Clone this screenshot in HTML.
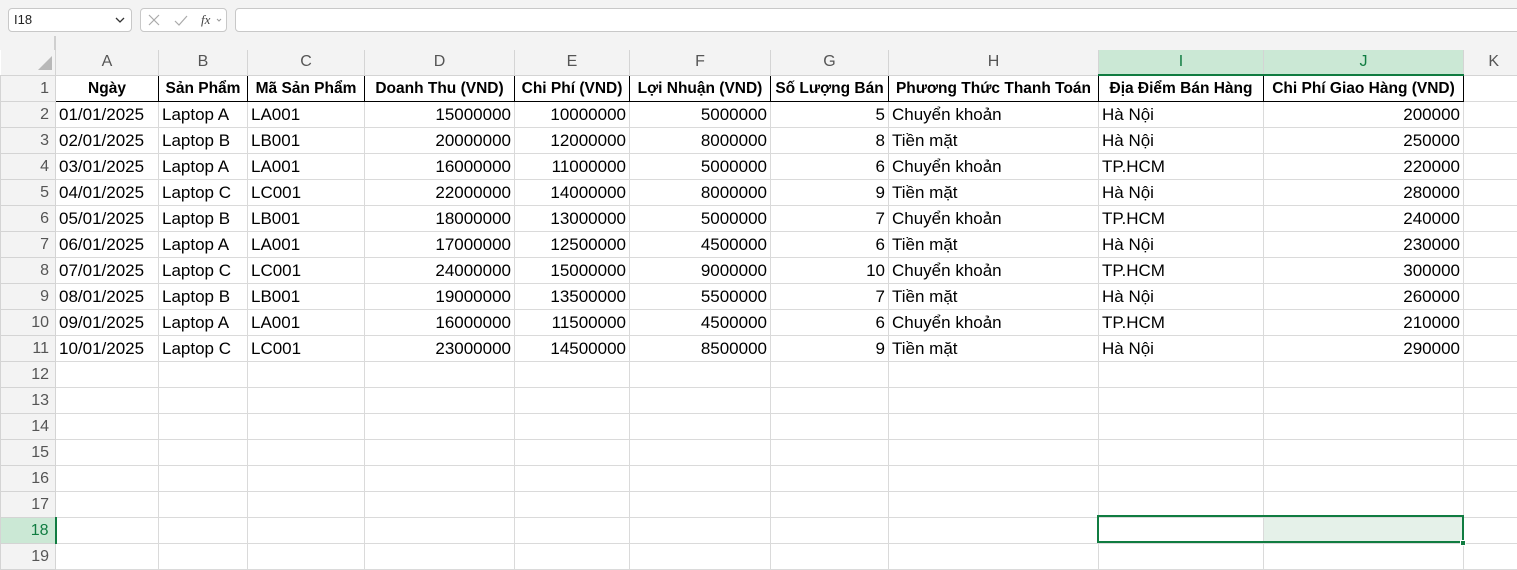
<!DOCTYPE html>
<html><head><meta charset="utf-8"><style>
*{margin:0;padding:0;box-sizing:border-box}
body{width:1517px;height:549px;background:#f3f3f3;font-family:"Liberation Sans",Arial,sans-serif;position:relative;overflow:hidden}
.nb{position:absolute;left:8px;top:8px;width:124px;height:24px;background:#fff;border:1px solid #c8c8c8;border-radius:4px;font-size:13px;line-height:22px;padding-left:5px;color:#222}
.fx{position:absolute;left:140px;top:8px;width:87px;height:24px;background:#fff;border:1px solid #c8c8c8;border-radius:4px}
.fi{position:absolute;left:235px;top:8px;width:1290px;height:24px;background:#fff;border:1px solid #c8c8c8;border-radius:4px}
.grid{position:absolute;left:0;top:50px;background:#fff}
table{border-collapse:collapse;table-layout:fixed;font-size:17px;width:1523px}
td{height:26px;border:1px solid #dadada;padding:2px 3px 0;white-space:nowrap;overflow:hidden;color:#000;line-height:22px}
tr.ch td{height:25px;background:#f3f3f3;color:#555;text-align:center;border-color:#d4d4d4;border-top:none;font-size:16px;padding-top:0;line-height:24px}
td.rh{background:#f3f3f3;color:#555;text-align:right;padding-right:6px;border-color:#d4d4d4;font-size:16px}
tr.h td:not(.rh){font-weight:bold;text-align:center;border:1.5px solid #000;font-size:15.5px}
td.n{text-align:right}
</style></head><body>
<div class="nb">I18<svg style="position:absolute;right:6px;top:8px" width="10" height="7"><path d="M1 1l4 4 4-4" fill="none" stroke="#333" stroke-width="1.3"/></svg></div>
<div class="fx"><svg width="87" height="22"><path d="M8 6l10 10M18 6L8 16" stroke="#aaa" stroke-width="1.2"/><path d="M34 12l4 4 8-9" fill="none" stroke="#aaa" stroke-width="1.2"/><text x="60" y="15" font-size="13" font-style="italic" fill="#444" font-family="Liberation Serif">fx</text><path d="M76 10l2 2 2-2" fill="none" stroke="#999"/></svg></div>
<div class="fi"></div>
<div style="position:absolute;left:54px;top:36px;width:2px;height:39px;background:#cfcfcf"></div>
<div class="grid">
<table>
<colgroup><col style="width:55px"><col style="width:103px"><col style="width:89px"><col style="width:117px"><col style="width:150px"><col style="width:115px"><col style="width:141px"><col style="width:118px"><col style="width:210px"><col style="width:165px"><col style="width:200px"><col style="width:60px"></colgroup>
<tr class="ch"><td style="background:#f3f3f3;border:none;border-right:1px solid #d4d4d4;position:relative"><svg style="position:absolute;left:36px;top:5px" width="16" height="16"><path d="M15 1V15H1Z" fill="#b8b8b8"/></svg></td><td>A</td><td>B</td><td>C</td><td>D</td><td>E</td><td>F</td><td>G</td><td>H</td><td style="background:#cbe8d5;color:#107c41;border-bottom:2px solid #107c41">I</td><td style="background:#cbe8d5;color:#107c41;border-bottom:2px solid #107c41">J</td><td style="border-right:none">K</td></tr>
<tr class="h"><td class="rh">1</td><td>Ngày</td><td>Sản Phẩm</td><td>Mã Sản Phẩm</td><td>Doanh Thu (VND)</td><td>Chi Phí (VND)</td><td>Lợi Nhuận (VND)</td><td>Số Lượng Bán</td><td>Phương Thức Thanh Toán</td><td>Địa Điểm Bán Hàng</td><td>Chi Phí Giao Hàng (VND)</td><td style="border:1px solid #dadada;border-left:1.5px solid #000;font-weight:normal"></td></tr>
<tr><td class="rh">2</td><td>01/01/2025</td><td>Laptop A</td><td>LA001</td><td class="n">15000000</td><td class="n">10000000</td><td class="n">5000000</td><td class="n">5</td><td>Chuyển khoản</td><td>Hà Nội</td><td class="n">200000</td><td></td></tr>
<tr><td class="rh">3</td><td>02/01/2025</td><td>Laptop B</td><td>LB001</td><td class="n">20000000</td><td class="n">12000000</td><td class="n">8000000</td><td class="n">8</td><td>Tiền mặt</td><td>Hà Nội</td><td class="n">250000</td><td></td></tr>
<tr><td class="rh">4</td><td>03/01/2025</td><td>Laptop A</td><td>LA001</td><td class="n">16000000</td><td class="n">11000000</td><td class="n">5000000</td><td class="n">6</td><td>Chuyển khoản</td><td>TP.HCM</td><td class="n">220000</td><td></td></tr>
<tr><td class="rh">5</td><td>04/01/2025</td><td>Laptop C</td><td>LC001</td><td class="n">22000000</td><td class="n">14000000</td><td class="n">8000000</td><td class="n">9</td><td>Tiền mặt</td><td>Hà Nội</td><td class="n">280000</td><td></td></tr>
<tr><td class="rh">6</td><td>05/01/2025</td><td>Laptop B</td><td>LB001</td><td class="n">18000000</td><td class="n">13000000</td><td class="n">5000000</td><td class="n">7</td><td>Chuyển khoản</td><td>TP.HCM</td><td class="n">240000</td><td></td></tr>
<tr><td class="rh">7</td><td>06/01/2025</td><td>Laptop A</td><td>LA001</td><td class="n">17000000</td><td class="n">12500000</td><td class="n">4500000</td><td class="n">6</td><td>Tiền mặt</td><td>Hà Nội</td><td class="n">230000</td><td></td></tr>
<tr><td class="rh">8</td><td>07/01/2025</td><td>Laptop C</td><td>LC001</td><td class="n">24000000</td><td class="n">15000000</td><td class="n">9000000</td><td class="n">10</td><td>Chuyển khoản</td><td>TP.HCM</td><td class="n">300000</td><td></td></tr>
<tr><td class="rh">9</td><td>08/01/2025</td><td>Laptop B</td><td>LB001</td><td class="n">19000000</td><td class="n">13500000</td><td class="n">5500000</td><td class="n">7</td><td>Tiền mặt</td><td>Hà Nội</td><td class="n">260000</td><td></td></tr>
<tr><td class="rh">10</td><td>09/01/2025</td><td>Laptop A</td><td>LA001</td><td class="n">16000000</td><td class="n">11500000</td><td class="n">4500000</td><td class="n">6</td><td>Chuyển khoản</td><td>TP.HCM</td><td class="n">210000</td><td></td></tr>
<tr><td class="rh">11</td><td>10/01/2025</td><td>Laptop C</td><td>LC001</td><td class="n">23000000</td><td class="n">14500000</td><td class="n">8500000</td><td class="n">9</td><td>Tiền mặt</td><td>Hà Nội</td><td class="n">290000</td><td></td></tr>
<tr><td class="rh">12</td><td></td><td></td><td></td><td></td><td></td><td></td><td></td><td></td><td></td><td></td><td></td></tr>
<tr><td class="rh">13</td><td></td><td></td><td></td><td></td><td></td><td></td><td></td><td></td><td></td><td></td><td></td></tr>
<tr><td class="rh">14</td><td></td><td></td><td></td><td></td><td></td><td></td><td></td><td></td><td></td><td></td><td></td></tr>
<tr><td class="rh">15</td><td></td><td></td><td></td><td></td><td></td><td></td><td></td><td></td><td></td><td></td><td></td></tr>
<tr><td class="rh">16</td><td></td><td></td><td></td><td></td><td></td><td></td><td></td><td></td><td></td><td></td><td></td></tr>
<tr><td class="rh">17</td><td></td><td></td><td></td><td></td><td></td><td></td><td></td><td></td><td></td><td></td><td></td></tr>
<tr><td class="rh" style="background:#cbe8d5;color:#107c41;border-right:2px solid #107c41">18</td><td></td><td></td><td></td><td></td><td></td><td></td><td></td><td></td><td></td><td style="background:#e5f1e9"></td><td></td></tr>
<tr><td class="rh">19</td><td></td><td></td><td></td><td></td><td></td><td></td><td></td><td></td><td></td><td></td><td></td></tr>
</table>
</div>
<div style="position:absolute;left:1097px;top:515px;width:367px;height:28px;border:2px solid #107c41"></div>
<div style="position:absolute;left:1460px;top:540px;width:6px;height:6px;background:#107c41;border:1px solid #fff"></div>
</body></html>
